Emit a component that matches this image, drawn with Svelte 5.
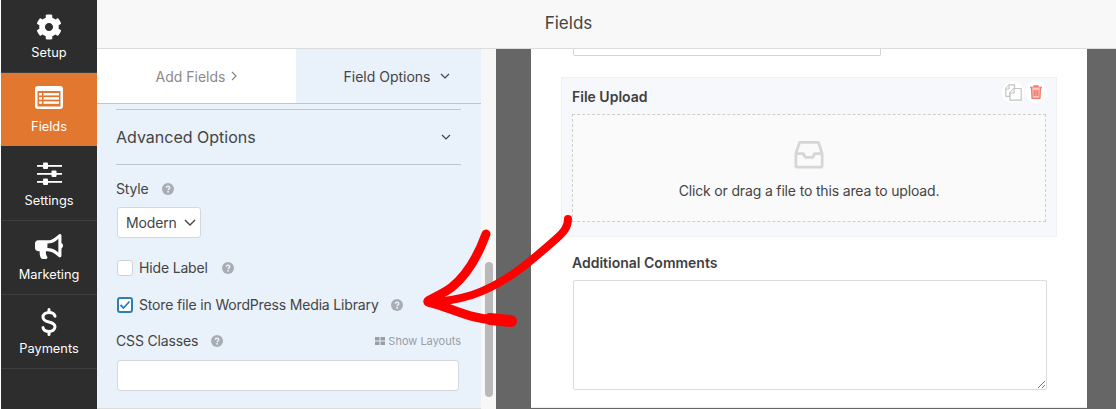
<script>
  const gear = "M487.4 315.7l-42.6-24.6c4.3-23.2 4.3-47 0-70.2l42.6-24.6c4.9-2.8 7.1-8.6 5.5-14-11.1-35.6-30-67.8-54.7-94.6-3.8-4.1-10-5.1-14.8-2.3L380.8 110c-17.9-15.4-38.5-27.3-60.8-35.1V25.8c0-5.6-3.9-10.5-9.4-11.7-36.7-8.2-74.3-7.8-109.2 0-5.5 1.2-9.4 6.1-9.4 11.7V75c-22.2 7.9-42.8 19.8-60.8 35.1L88.7 85.5c-4.9-2.8-11-1.9-14.8 2.3-24.7 26.7-43.6 58.9-54.7 94.6-1.7 5.4.6 11.2 5.5 14L67.3 221c-4.3 23.2-4.3 47 0 70.2l-42.6 24.6c-4.9 2.8-7.1 8.6-5.5 14 11.1 35.6 30 67.8 54.7 94.6 3.8 4.1 10 5.1 14.8 2.3l42.6-24.6c17.9 15.4 38.5 27.3 60.8 35.1v49.2c0 5.6 3.9 10.5 9.4 11.7 36.7 8.2 74.3 7.8 109.2 0 5.5-1.2 9.4-6.1 9.4-11.7v-49.2c22.2-7.9 42.8-19.8 60.8-35.1l42.6 24.6c4.9 2.8 11 1.9 14.8-2.3 24.7-26.7 43.6-58.9 54.7-94.6 1.5-5.5-.7-11.3-5.6-14.1zM256 336c-44.1 0-80-35.9-80-80s35.9-80 80-80 80 35.9 80 80-35.9 80-80 80z";
  const horn = "M576 240c0-23.63-12.95-44.04-32-55.12V32.01C544 23.26 537.02 0 512 0c-7.12 0-14.19 2.38-19.98 7.02l-85.03 68.03C364.28 109.19 310.66 128 256 128H64c-35.35 0-64 28.65-64 64v96c0 35.35 28.65 64 64 64h33.7c-1.39 10.48-2.18 21.14-2.18 32 0 39.77 9.26 77.35 25.56 110.94 5.19 10.69 16.52 17.06 28.4 17.06h74.28c26.05 0 41.69-29.84 25.9-50.56-16.4-21.52-26.15-48.36-26.15-77.44 0-11.11 1.62-21.79 4.41-32H256c54.66 0 108.28 18.81 150.98 52.95l85.03 68.03a32.023 32.023 0 0 0 19.98 7.02c24.92 0 32-22.78 32-32V295.13C563.05 284.04 576 263.63 576 240zm-96 141.42l-33.05-26.44C392.95 311.78 325.12 288 256 288v-96c69.12 0 136.95-23.78 190.95-66.98L480 98.58v282.84z";
</script>

{#snippet help()}
  <svg class="help" viewBox="0 0 12 12" width="12" height="12">
    <circle cx="6" cy="6" r="6" fill="#a9adb3" />
    <path d="M4.200 4.700c.1-1 .9-1.500 1.800-1.500s1.800.6 1.800 1.500c0 1.200-1.700 1.200-1.700 2.500" fill="none" stroke="#eaf2fc" stroke-width="1.400" />
    <rect x="5.300" y="8" width="1.600" height="1.600" fill="#eaf2fc" />
  </svg>
{/snippet}

<div class="builder">
  <nav class="sidebar">
    <div class="item">
      <svg viewBox="0 0 512 512" width="26" height="26" fill="#fff"><path d={gear} /></svg>
      <span>Setup</span>
    </div>
    <div class="item active">
      <svg viewBox="0 0 28 23" width="28" height="23">
        <rect width="28" height="23" rx="3" fill="#fff" />
        <rect x="2.500" y="5" width="23" height="15.500" fill="#e27730" />
        <g fill="#fff">
          <rect x="4" y="7" width="3" height="2.400" /><rect x="4" y="11.200" width="3" height="2.400" /><rect x="4" y="15.400" width="3" height="2.400" />
          <rect x="8.500" y="7" width="15.500" height="2.400" /><rect x="8.500" y="11.200" width="15.500" height="2.400" /><rect x="8.500" y="15.400" width="15.500" height="2.400" />
        </g>
      </svg>
      <span>Fields</span>
    </div>
    <div class="item sliders">
      <svg viewBox="0 0 25 24" width="25" height="24" fill="#fff">
        <rect x="0" y="3" width="25" height="1.800" /><rect x="6" y="0.500" width="5" height="6.500" rx="1" />
        <rect x="0" y="11" width="25" height="1.800" /><rect x="14.500" y="8.500" width="5" height="6.500" rx="1" />
        <rect x="0" y="19" width="25" height="1.800" /><rect x="6" y="16.500" width="5" height="6.500" rx="1" />
      </svg>
      <span>Settings</span>
    </div>
    <div class="item bullhorn">
      <svg viewBox="0 0 576 512" width="28" height="25" fill="#fff"><path d={horn} /></svg>
      <span>Marketing</span>
    </div>
    <div class="item">
      <svg viewBox="0 0 16 28" width="16" height="28" fill="none" stroke="#fff" stroke-width="3" stroke-linecap="round">
        <path d="M14 8.200C13.400 5.800 11 4.600 8 4.600c-3.400 0-6 1.700-6 4.600 0 3 2.800 4 6 4.800 3.300.8 6 1.800 6 4.800 0 2.900-2.700 4.600-6 4.600-3.100 0-5.500-1.300-6-3.800" />
        <path d="M8 1.500v3M8 23.500v3" />
      </svg>
      <span>Payments</span>
    </div>
  </nav>

  <div class="main">
    <header>Fields</header>
    <div class="body">
      <section class="panel">
        <div class="tabs">
          <div class="tab add">
            Add Fields
            <svg viewBox="0 0 6 10" width="6" height="10"><path d="M1 1l4 4-4 4" fill="none" stroke="#888" stroke-width="1.200" /></svg>
          </div>
          <div class="tab options">
            Field Options
            <svg viewBox="0 0 10 6" width="10" height="6"><path d="M1 1l4 4 4-4" fill="none" stroke="#444" stroke-width="1.200" /></svg>
          </div>
        </div>
        <div class="options-body">
          <div class="group-title">
            <span>Advanced Options</span>
            <svg viewBox="0 0 10 6" width="10" height="6"><path d="M1 1l4 4 4-4" fill="none" stroke="#444" stroke-width="1.200" /></svg>
          </div>
          <div class="label style-label">Style {@render help()}</div>
          <div class="select">
            Modern
            <svg viewBox="0 0 12 7" width="12" height="7"><path d="M1 1l5 5 5-5" fill="none" stroke="#444" stroke-width="1.400" /></svg>
          </div>
          <div class="check first"><span class="box"></span>Hide Label {@render help()}</div>
          <div class="check second">
            <span class="box on">
              <svg viewBox="0 0 12 10" width="12" height="10"><path d="M1.500 5l3 3 6-6.500" fill="none" stroke="#2e7db5" stroke-width="1.800" /></svg>
            </span>
            Store file in WordPress Media Library {@render help()}
          </div>
          <div class="css-row">
            <div class="label">CSS Classes {@render help()}</div>
            <div class="layouts">
              <svg viewBox="0 0 10 8" width="10" height="8" fill="#9a9ea4">
                <rect width="4.500" height="3.500" /><rect x="5.500" width="4.500" height="3.500" /><rect y="4.500" width="4.500" height="3.500" /><rect x="5.500" y="4.500" width="4.500" height="3.500" />
              </svg>
              Show Layouts
            </div>
          </div>
          <div class="text-input"></div>
        </div>
      </section>

      <div class="track"><div class="thumb"></div></div>

      <section class="preview">
        <div class="page">
          <div class="cut-input"></div>
          <div class="upload-field">
            <div class="actions">
              <span class="action">
                <svg viewBox="0 0 17 17" width="17" height="17" fill="#fff" stroke="#c4c4c4" stroke-width="1.200" stroke-linejoin="round">
                  <path d="M4 .8h5.500v3.400L4.600 9.200v3.100H.8V4.500z" />
                  <path d="M9 4.500h7.200v11.700H5V8.700z" />
                  <path d="M.8 5H4V.8M5 9h4V4.500" />
                </svg>
              </span>
              <span class="action">
                <svg viewBox="0 0 12 14" width="12" height="14" fill="none" stroke="#ee7a6c" stroke-width="1.300">
                  <path d="M0 2.500h12M4 2.500V1h4v1.500" />
                  <path d="M1.500 2.500l.6 10.900h7.800l.6-10.900" fill="#f8c3bc" />
                  <path d="M4.200 5v6M6 5v6M7.800 5v6" />
                </svg>
              </span>
            </div>
            <div class="field-label">File Upload</div>
            <div class="dropzone">
              <svg viewBox="0 0 32 30" width="30" height="29" fill="none" stroke="#d6d6d6" stroke-width="3" stroke-linejoin="round">
                <path d="M2 14 6 2h20l4 12v13a1.500 1.500 0 0 1-1.500 1.500h-25A1.500 1.500 0 0 1 2 27z" />
                <path d="M2 14h8l2 4h8l2-4h8" />
              </svg>
              <p>Click or drag a file to this area to upload.</p>
            </div>
          </div>
          <div class="comments">
            <div class="field-label">Additional Comments</div>
            <div class="textarea">
              <svg class="grip" viewBox="0 0 9 9" width="9" height="9" stroke="#777" stroke-width="1"><path d="M1 8l7-7M5 8l3-3" /></svg>
            </div>
          </div>
        </div>
      </section>
    </div>
  </div>

  <!-- hand drawn arrow on top of the screenshot -->
  <svg class="arrow" viewBox="0 0 1116 409" width="1116" height="409" fill="none" stroke="#fe0000" stroke-linecap="round" stroke-linejoin="round">
    <path d="M486 234C478 256 468 274 452 287 443 294 434 297 428 301" stroke-width="9" />
    <path d="M568 219C568 227 564 232 556 239 530 262 505 284 472 295 456 300 440 302 428 302" stroke-width="8" />
    <path d="M428 302C445 306 458 313 475 317 488 320 500 321 511 321" stroke-width="9" />
    <path d="M490 319 511 321" stroke-width="12" />
  </svg>
</div>

<style>
  :global(body) {
    margin: 0;
    background: #fff;
  }

  .builder {
    position: relative;
    display: flex;
    width: 1116px;
    height: 409px;
    overflow: hidden;
    font-family: Inter, "Liberation Sans", sans-serif;
    font-size: 14px;
    letter-spacing: -0.16px;
    color: #444;
  }

  .sidebar {
    width: 96px;
    margin-left: 1px;
    flex: none;
    background: #2d2d2d;
  }

  .item {
    height: 74px;
    box-sizing: border-box;
    border-bottom: 1px solid #3e3e3e;
    display: flex;
    flex-direction: column;
    align-items: center;
    justify-content: flex-end;
    gap: 5px;
    padding-bottom: 11px;
    color: #fff;
    font-size: 12.8px;
    letter-spacing: 0;
    line-height: 16px;
  }

  .item:first-child {
    height: 73px;
  }

  .item.active {
    height: 73px;
    background: #e27730;
    border-bottom: 0;
    margin-bottom: 1px;
    padding-bottom: 11px;
    gap: 10px;
  }

  .item.sliders {
    gap: 7px;
  }

  .item.bullhorn {
    gap: 8px;
  }

  .main {
    flex: 1;
    min-width: 0;
    display: flex;
    flex-direction: column;
  }

  header {
    height: 46px;
    flex: none;
    background: #f8f8f8;
    border-bottom: 1px solid #dcdcdc;
    padding: 0 76px 2px 0;
    box-sizing: content-box;
    display: flex;
    align-items: center;
    justify-content: center;
    font-size: 17px;
    letter-spacing: 0;
    color: #444;
  }

  .body {
    flex: 1;
    min-height: 0;
    display: flex;
  }

  .panel {
    width: 384px;
    flex: none;
    background: #e9f1fb;
    border-bottom: 1px solid #dcdcdc;
    box-sizing: border-box;
  }

  .tabs {
    display: flex;
    height: 54px;
    border-bottom: 1px solid #bcc6d3;
    box-sizing: content-box;
    letter-spacing: 0;
  }

  .tab {
    display: flex;
    align-items: center;
    justify-content: center;
    gap: 6px;
  }

  .add {
    width: 199px;
    background: #fff;
    color: #8a8a8a;
  }

  .options {
    flex: 1;
    color: #444;
    gap: 9px;
    padding-left: 16px;
  }

  .options-body {
    padding: 5px 20px 0 19px;
  }

  .group-title {
    height: 56px;
    box-sizing: border-box;
    border-top: 1px solid #bcc6d3;
    border-bottom: 1px solid #bcc6d3;
    display: flex;
    align-items: center;
    justify-content: space-between;
    padding-right: 10px;
    font-size: 16px;
    letter-spacing: 0;
  }

  .label,
  .check {
    display: flex;
    align-items: center;
    line-height: 18px;
  }

  .help {
    margin-left: 13px;
  }

  .style-label {
    margin-top: 15px;
  }

  .select {
    width: 84px;
    height: 31px;
    box-sizing: border-box;
    margin: 9px 0 0 1px;
    background: #fff;
    border: 1px solid #d4d8dd;
    border-radius: 3px;
    display: flex;
    align-items: center;
    gap: 7px;
    padding-left: 8px;
  }

  .check {
    margin-left: 1px;
    gap: 6px;
  }

  .check.first {
    margin-top: 21px;
  }

  .check.second {
    margin-top: 19px;
  }

  .check .help {
    margin-left: 8px;
  }

  .check.second .help {
    margin-left: 6px;
  }

  .box {
    width: 16px;
    height: 16px;
    box-sizing: border-box;
    background: #fff;
    border: 1px solid #ced3d9;
    border-radius: 3px;
    display: flex;
    align-items: center;
    justify-content: center;
  }

  .box.on {
    border: 2px solid #2e7db5;
  }

  .css-row {
    margin-top: 18px;
    display: flex;
    align-items: center;
    justify-content: space-between;
  }

  .layouts {
    display: flex;
    align-items: center;
    gap: 3px;
    font-size: 11px;
    letter-spacing: 0;
    color: #9a9ea4;
  }

  .text-input {
    height: 31px;
    margin: 10px 2px 0 1px;
    box-sizing: border-box;
    background: #fff;
    border: 1px solid #d4d8dd;
    border-radius: 3px;
  }

  .track {
    width: 15px;
    flex: none;
    background: #f7f7f7;
    display: flex;
    justify-content: center;
    padding: 213px 0 12px;
    box-sizing: border-box;
  }

  .thumb {
    width: 8px;
    border-radius: 4px;
    background: #b9b9b9;
  }

  .preview {
    flex: 1;
    background: #666;
    padding: 0 29px 0 35px;
    min-width: 0;
  }

  .page {
    background: #fff;
    height: 359px;
    box-sizing: border-box;
    padding: 0 30px;
    border-bottom: 1px solid #eee;
  }

  .cut-input {
    width: 308px;
    height: 7px;
    margin-left: 12px;
    box-sizing: border-box;
    border: 1px solid #d4d4d4;
    border-top: 0;
    border-radius: 0 0 2px 2px;
  }

  .upload-field {
    position: relative;
    margin-top: 21px;
    height: 160px;
    box-sizing: border-box;
    background: #f7f8fb;
    border: 1px solid #f0f1f4;
    padding: 10px 10px 0;
  }

  .actions {
    position: absolute;
    top: 3px;
    right: 9px;
    display: flex;
    align-items: center;
    gap: 1px;
  }

  .action {
    width: 22px;
    height: 22px;
    border-radius: 50%;
    background: #fff;
    display: flex;
    align-items: center;
    justify-content: center;
  }

  .field-label {
    font-weight: 600;
    letter-spacing: 0;
    line-height: 18px;
    color: #3f3f3f;
  }

  .dropzone {
    margin-top: 8px;
    height: 108px;
    box-sizing: border-box;
    background: #fafafb;
    border: 1px dashed #cfcfcf;
    display: flex;
    flex-direction: column;
    align-items: center;
    padding-top: 25px;
  }

  .dropzone p {
    margin: 13px 0 0;
    line-height: 18px;
  }

  .comments {
    margin: 17px 10px 0 11px;
  }

  .textarea {
    position: relative;
    margin: 8px 0 0 1px;
    height: 110px;
    width: 474px;
    box-sizing: border-box;
    background: #fff;
    border: 1px solid #dcdcdc;
    border-radius: 2px;
  }

  .grip {
    position: absolute;
    right: 0;
    bottom: 0;
  }

  .arrow {
    position: absolute;
    left: 0;
    top: 0;
    pointer-events: none;
  }
</style>
